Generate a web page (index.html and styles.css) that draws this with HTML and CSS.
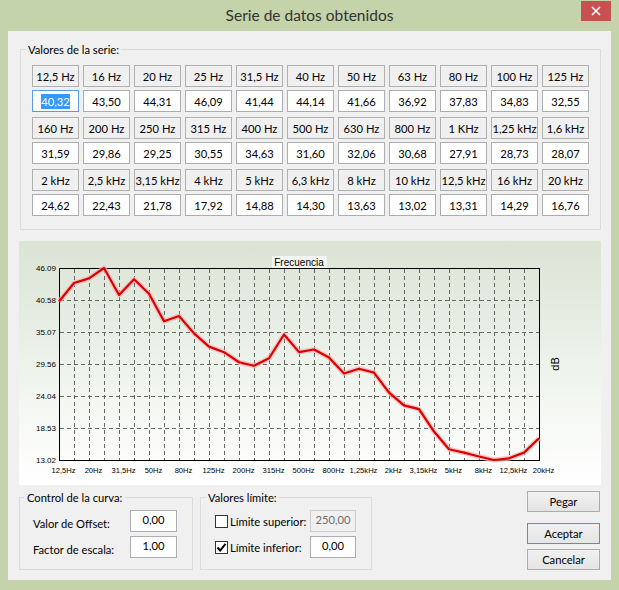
FILE: index.html
```html
<!DOCTYPE html>
<html lang="es">
<head>
<meta charset="utf-8">
<title>Serie de datos obtenidos</title>
<link rel="stylesheet" href="styles.css">
</head>
<body>
<div class="window">
  <div class="titlebar">
    <div class="title">Serie de datos obtenidos</div>
    <div class="close">
      <svg width="10" height="10" viewBox="0 0 10 10"><path d="M1 1 L9 9 M9 1 L1 9" stroke="#fff" stroke-width="1.6" fill="none"/></svg>
    </div>
  </div>
  <div class="client">
    <div class="group series">
      <div class="group-title">Valores de la serie:</div>
      <div class="bands">
        <div class="band">
          <div class="hcell">12,5 Hz</div><div class="hcell">16 Hz</div><div class="hcell">20 Hz</div><div class="hcell">25 Hz</div><div class="hcell">31,5 Hz</div><div class="hcell">40 Hz</div><div class="hcell">50 Hz</div><div class="hcell">63 Hz</div><div class="hcell">80 Hz</div><div class="hcell">100 Hz</div><div class="hcell">125 Hz</div>
          <div class="vcell focus"><span class="sel">40,32</span></div><div class="vcell">43,50</div><div class="vcell">44,31</div><div class="vcell">46,09</div><div class="vcell">41,44</div><div class="vcell">44,14</div><div class="vcell">41,66</div><div class="vcell">36,92</div><div class="vcell">37,83</div><div class="vcell">34,83</div><div class="vcell">32,55</div>
        </div>
        <div class="band">
          <div class="hcell">160 Hz</div><div class="hcell">200 Hz</div><div class="hcell">250 Hz</div><div class="hcell">315 Hz</div><div class="hcell">400 Hz</div><div class="hcell">500 Hz</div><div class="hcell">630 Hz</div><div class="hcell">800 Hz</div><div class="hcell">1 KHz</div><div class="hcell">1,25 kHz</div><div class="hcell">1,6 kHz</div>
          <div class="vcell">31,59</div><div class="vcell">29,86</div><div class="vcell">29,25</div><div class="vcell">30,55</div><div class="vcell">34,63</div><div class="vcell">31,60</div><div class="vcell">32,06</div><div class="vcell">30,68</div><div class="vcell">27,91</div><div class="vcell">28,73</div><div class="vcell">28,07</div>
        </div>
        <div class="band">
          <div class="hcell">2 kHz</div><div class="hcell">2,5 kHz</div><div class="hcell">3,15 kHz</div><div class="hcell">4 kHz</div><div class="hcell">5 kHz</div><div class="hcell">6,3 kHz</div><div class="hcell">8 kHz</div><div class="hcell">10 kHz</div><div class="hcell">12,5 kHz</div><div class="hcell">16 kHz</div><div class="hcell">20 kHz</div>
          <div class="vcell">24,62</div><div class="vcell">22,43</div><div class="vcell">21,78</div><div class="vcell">17,92</div><div class="vcell">14,88</div><div class="vcell">14,30</div><div class="vcell">13,63</div><div class="vcell">13,02</div><div class="vcell">13,31</div><div class="vcell">14,29</div><div class="vcell">16,76</div>
        </div>
      </div>
    </div>

    <div class="chart">
      <svg width="582" height="244" viewBox="0 0 582 244">
        <g class="grid">
          <path d="M40 59H520M40 91H520M40 123H520M40 155H520M40 187H520"/>
          <path d="M55 27V219M70 27V219M85 27V219M100 27V219M115 27V219M130 27V219M145 27V219M160 27V219M175 27V219M190 27V219M205 27V219M220 27V219M235 27V219M250 27V219M265 27V219M280 27V219M295 27V219M310 27V219M325 27V219M340 27V219M355 27V219M370 27V219M385 27V219M400 27V219M415 27V219M430 27V219M445 27V219M460 27V219M475 27V219M490 27V219M505 27V219"/>
        </g>
        <rect class="frame" x="40.5" y="27.5" width="480" height="192"/>
        <polyline class="halo" points="40,60.5 55,42.04 70,37.33 85,27 100,54 115,38.32 130,52.72 145,80.24 160,74.96 175,92.37 190,105.61 205,111.18 220,121.23 235,124.77 250,117.22 265,93.53 280,111.13 295,108.46 310,116.47 325,132.55 340,127.79 355,131.62 370,151.65 385,164.37 400,168.14 415,190.55 430,208.2 445,211.57 460,215.46 475,219 490,217.32 505,211.63 520,197.29"/>
        <polyline class="curve" points="40,60.5 55,42.04 70,37.33 85,27 100,54 115,38.32 130,52.72 145,80.24 160,74.96 175,92.37 190,105.61 205,111.18 220,121.23 235,124.77 250,117.22 265,93.53 280,111.13 295,108.46 310,116.47 325,132.55 340,127.79 355,131.62 370,151.65 385,164.37 400,168.14 415,190.55 430,208.2 445,211.57 460,215.46 475,219 490,217.32 505,211.63 520,197.29"/>
        <rect class="title-bg" x="253" y="15" width="55" height="12"/>
        <text class="ctitle" x="280" y="24.5">Frecuencia</text>
        <text class="dbl" transform="translate(540 123) rotate(-90)">dB</text>
        <g class="ylab">
          <text x="37" y="30">46.09</text>
          <text x="37" y="62">40.58</text>
          <text x="37" y="94">35.07</text>
          <text x="37" y="126">29.56</text>
          <text x="37" y="158">24.04</text>
          <text x="37" y="190">18.53</text>
          <text x="37" y="222">13.02</text>
        </g>
        <g class="xlab">
          <text x="44.5" y="232">12,5Hz</text>
          <text x="74.5" y="232">20Hz</text>
          <text x="104.5" y="232">31,5Hz</text>
          <text x="134.5" y="232">50Hz</text>
          <text x="164.5" y="232">80Hz</text>
          <text x="194.5" y="232">125Hz</text>
          <text x="224.5" y="232">200Hz</text>
          <text x="254.5" y="232">315Hz</text>
          <text x="284.5" y="232">500Hz</text>
          <text x="314.5" y="232">800Hz</text>
          <text x="344.5" y="232">1,25kHz</text>
          <text x="374.5" y="232">2kHz</text>
          <text x="404.5" y="232">3,15kHz</text>
          <text x="434.5" y="232">5kHz</text>
          <text x="464.5" y="232">8kHz</text>
          <text x="494.5" y="232">12,5kHz</text>
          <text x="524.5" y="232">20kHz</text>
        </g>
      </svg>
    </div>

    <div class="bottom">
      <div class="group curvebox">
        <div class="group-title">Control de la curva:</div>
        <div class="form">
          <span class="flabel">Valor de Offset:</span><div class="input">0,00</div>
          <span class="flabel">Factor de escala:</span><div class="input">1,00</div>
        </div>
      </div>
      <div class="group limits">
        <div class="group-title">Valores límite:</div>
        <div class="form limits-form">
          <span class="check"></span><span class="clabel">Límite superior:</span><div class="input disabled">250,00</div>
          <span class="check"><svg width="11" height="11" viewBox="0 0 11 11"><path d="M1.5 5.5 L4.2 8.5 L9.5 1.8" stroke="#000" stroke-width="2" fill="none"/></svg></span><span class="clabel">Límite inferior:</span><div class="input">0,00</div>
        </div>
      </div>
      <div class="buttons">
        <div class="btn">Pegar</div>
        <div class="btn default">Aceptar</div>
        <div class="btn">Cancelar</div>
      </div>
    </div>
  </div>
</div>
</body>
</html>
```

FILE: styles.css
```css
* { box-sizing: border-box; }
html, body { margin: 0; padding: 0; }
body {
  width: 619px;
  height: 590px;
  overflow: hidden;
  background: #c4d3aa;
  font-family: Lato, "Noto Sans", sans-serif;
  font-size: 11.2px;
  color: #000;
}
.window {
  width: 619px;
  height: 590px;
  background: #c4d3aa;
  display: flex;
  flex-direction: column;
}
.titlebar {
  height: 31px;
  display: grid;
  grid-template-columns: 1fr auto 1fr;
  padding: 0 8px;
}
.title {
  grid-column: 2;
  line-height: 31px;
  font-size: 15.5px;
  color: #333;
}
.close {
  grid-column: 3;
  justify-self: end;
  align-self: start;
  margin-top: 1px;
  width: 30px;
  height: 20px;
  background: #c75050;
  display: flex;
  align-items: center;
  justify-content: center;
}
.client {
  margin: 0 8px;
  height: 549px;
  background: #f0f0f0;
  padding: 18px 10px 0 11px;
  display: flex;
  flex-direction: column;
}
.group {
  border: 1px solid #dcdcdc;
}
.group-title {
  width: max-content;
  margin: -8px 0 0 5px;
  padding: 0 2px;
  line-height: 15px;
  background: #f0f0f0;
}
.series {
  margin-left: 1px;
}
.bands {
  margin: 8px 11px 13px;
  display: flex;
  flex-direction: column;
  gap: 5px;
}
.band {
  display: grid;
  grid-template-columns: repeat(11, 47px);
  grid-template-rows: 22px 22px;
  column-gap: 4px;
  row-gap: 3px;
}
.hcell, .vcell {
  display: flex;
  align-items: center;
  justify-content: center;
  white-space: nowrap;
  overflow: hidden;
}
.hcell {
  border: 1px solid #b0b0b0;
}
.vcell {
  border: 1px solid #abadb3;
  background: #fff;
}
.vcell.focus { border-color: #569de5; }
.sel {
  background: #3399ff;
  color: #fff;
  line-height: 15px;
}

.chart {
  margin-top: 11px;
  height: 244px;
  background: linear-gradient(#dae4d5 0%, #e9efe6 40%, #f7f9f6 75%, #ffffff 100%);
}
.chart svg { display: block; }
.grid path {
  stroke: #666;
  stroke-width: 1;
  stroke-dasharray: 4 3;
  fill: none;
  shape-rendering: crispEdges;
  transform: translate(0.5px, 0.5px);
}
.frame {
  fill: none;
  stroke: #000;
  stroke-width: 1;
}
.halo {
  fill: none;
  stroke: #f7b5b5;
  stroke-width: 5;
  stroke-linejoin: round;
  opacity: 0.7;
}
.curve {
  fill: none;
  stroke: #dd0000;
  stroke-width: 2.2;
  stroke-linejoin: round;
}
.title-bg { fill: #f2f5f0; }
.ctitle, .dbl {
  font-family: "Liberation Sans", Arial, sans-serif;
  font-size: 10px;
  text-anchor: middle;
  fill: #000;
}
.dbl { font-size: 11px; }
.ylab text {
  font-family: "Liberation Sans", Arial, sans-serif;
  font-size: 8px;
  text-anchor: end;
  fill: #000;
}
.xlab text {
  font-family: "Liberation Sans", Arial, sans-serif;
  font-size: 7.6px;
  text-anchor: middle;
  fill: #000;
}

.bottom {
  margin-top: 12px;
  display: flex;
  align-items: flex-start;
}
.curvebox {
  width: 174px;
}
.limits {
  width: 172px;
  margin-left: 7px;
}
.form {
  margin: 5px 0 11px 13px;
  display: grid;
  grid-template-columns: 97px 47px;
  grid-auto-rows: 22px;
  row-gap: 4px;
  align-items: center;
  white-space: nowrap;
}
.limits-form {
  margin-left: 14px;
  grid-template-columns: 13px 82px 46px;
}
.flabel { padding-top: 4px; }
.clabel { padding-left: 2px; }
.input {
  height: 22px;
  border: 1px solid #abadb3;
  background: #fff;
  display: flex;
  align-items: center;
  justify-content: center;
  padding-bottom: 3px;
}
.input.disabled {
  background: #f0f0f0;
  border-color: #cccccc;
  color: #6d6d6d;
}
.check {
  width: 13px;
  height: 13px;
  border: 1px solid #333;
  background: #fff;
  display: flex;
  align-items: center;
  justify-content: center;
}
.check svg { display: block; }
.buttons {
  margin: -6px 1px 0 auto;
  display: flex;
  flex-direction: column;
}
.btn {
  width: 73px;
  height: 21px;
  border: 1px solid #acacac;
  background: linear-gradient(#f0f0f0, #e5e5e5);
  display: flex;
  align-items: center;
  justify-content: center;
}
.btn.default {
  margin-top: 11px;
  border-color: #3399ff;
}
.btn + .btn:last-child { margin-top: 5px; }
```
